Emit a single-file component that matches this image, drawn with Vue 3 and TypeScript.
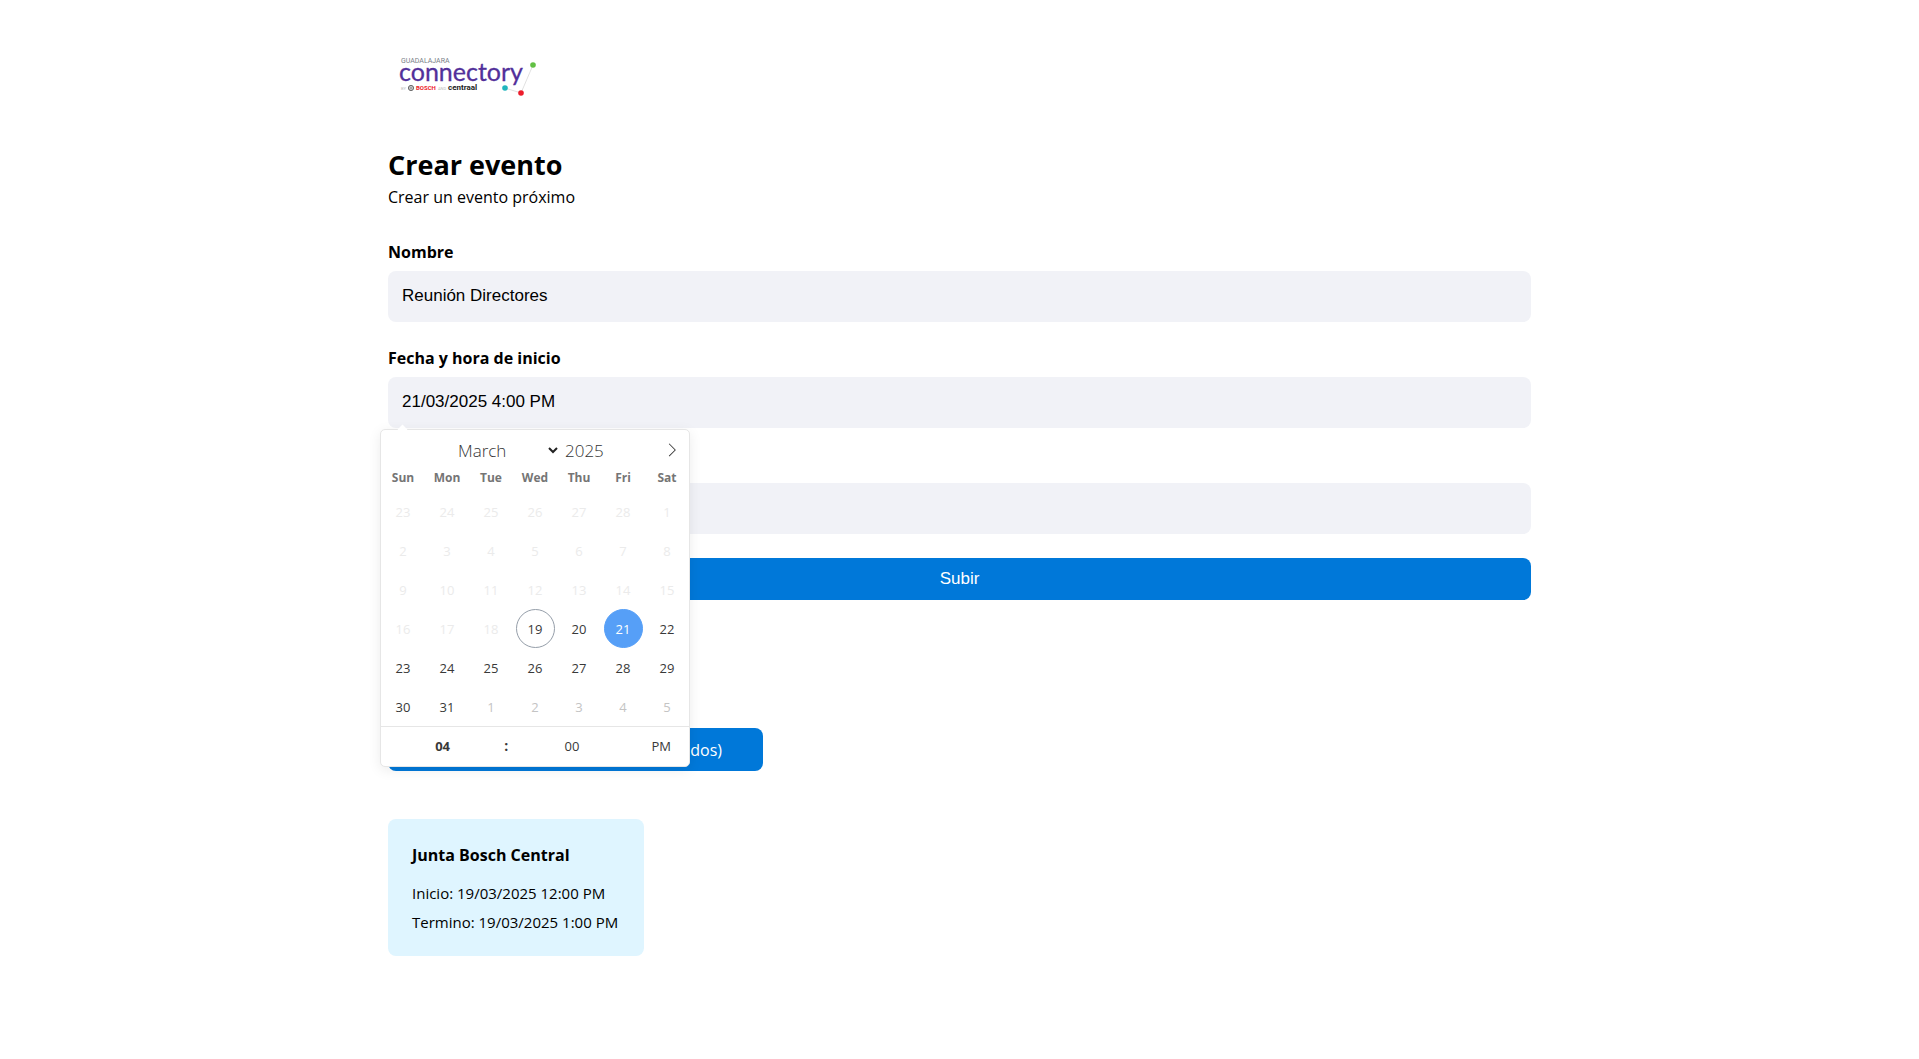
<script setup lang="ts">
import { ref } from 'vue'

interface Day {
  key: number
  label: number
  state: 'disabled' | 'today' | 'selected' | 'next' | 'normal'
}

const name = ref('Reunión Directores')
const start = ref('21/03/2025 4:00 PM')
const end = ref('')
const month = ref('March')
const year = ref('2025')
const hour = ref('04')
const minute = ref('00')

const weekdays = ['Sun', 'Mon', 'Tue', 'Wed', 'Thu', 'Fri', 'Sat']

// Six weeks, starting on Sunday 23 February 2025
const days: Day[] = Array.from({ length: 42 }, (_, i) => {
  const date = new Date(2025, 1, 23 + i)
  const inMonth = date.getMonth() === 2
  const label = date.getDate()
  let state: Day['state'] = 'normal'
  if (date.getMonth() === 3) state = 'next'
  else if (!inMonth || label < 19) state = 'disabled'
  else if (label === 19) state = 'today'
  else if (label === 21) state = 'selected'
  return { key: i, label, state }
})
</script>

<template>
  <main class="page">
    <svg class="logo" width="160" height="64" viewBox="0 0 160 64" role="img" aria-label="Guadalajara Connectory">
      <text x="13" y="23" class="logo-city">GUADALAJARA</text>
      <text x="11" y="41" class="logo-name">connectory</text>
      <text x="13" y="50" class="logo-by">BY</text>
      <circle cx="23" cy="48" r="2.6" fill="none" stroke="#666" />
      <path d="M22 46v4M24 46v4M22 48h2" stroke="#666" stroke-width="0.7" />
      <text x="28" y="50" class="logo-bosch">BOSCH</text>
      <text x="50" y="50" class="logo-by">AND</text>
      <text x="60" y="50" class="logo-centraal">centraal</text>
      <path d="M117 48l16 5l12-28" fill="none" stroke="#d9d9d9" stroke-width="0.8" />
      <circle cx="145" cy="25" r="2.8" fill="#62c044" />
      <circle cx="117" cy="48" r="2.8" fill="#21b5bd" />
      <circle cx="133" cy="53" r="2.8" fill="#ed1c2b" />
    </svg>

    <h1>Crear evento</h1>
    <p class="subtitle">Crear un evento próximo</p>

    <form @submit.prevent>
      <div class="field">
        <label for="name">Nombre</label>
        <input id="name" v-model="name" type="text" />
      </div>

      <div class="field">
        <label for="start">Fecha y hora de inicio</label>
        <input id="start" v-model="start" type="text" />

        <div class="calendar">
          <div class="months">
            <div class="month-select">
              <select v-model="month" aria-label="Month">
                <option>March</option>
              </select>
              <svg width="10" height="7" viewBox="0 0 10 7" aria-hidden="true">
                <path d="M1 1l4 4l4-4" fill="none" stroke="#222" stroke-width="2" />
              </svg>
            </div>
            <input v-model="year" class="year" type="text" aria-label="Year" />
            <button type="button" class="next-month" aria-label="Next month">
              <svg width="14" height="14" viewBox="0 0 17 17">
                <path d="M13.207 8.472l-7.854 7.854-0.707-0.707 7.146-7.146-7.146-7.148 0.707-0.707 7.854 7.854z" fill="#333" />
              </svg>
            </button>
          </div>

          <div class="weekdays">
            <span v-for="day in weekdays" :key="day">{{ day }}</span>
          </div>

          <div class="days">
            <button
              v-for="day in days"
              :key="day.key"
              type="button"
              class="day"
              :class="day.state"
              :disabled="day.state === 'disabled'"
            >
              {{ day.label }}
            </button>
          </div>

          <div class="time">
            <input v-model="hour" class="hour" type="text" aria-label="Hour" />
            <span class="separator">:</span>
            <input v-model="minute" type="text" aria-label="Minute" />
            <button type="button" class="meridiem">PM</button>
          </div>
        </div>
      </div>

      <div class="field unlabelled">
        <input v-model="end" type="text" aria-label="Fecha y hora de fin" />
      </div>

      <button type="submit" class="submit">Subir</button>
    </form>

    <button type="button" class="export">dos)</button>

    <article class="event">
      <h2>Junta Bosch Central</h2>
      <p>Inicio: 19/03/2025 12:00 PM</p>
      <p>Termino: 19/03/2025 1:00 PM</p>
    </article>
  </main>
</template>

<style>
body {
  background: #fff;
}
</style>

<style scoped>
* {
  box-sizing: border-box;
}

.page {
  max-width: 1191px;
  margin: 0 auto;
  padding: 40px 24px;
  color: #000;
  font-family: "Segoe UI", "Open Sans", "Noto Sans", sans-serif;
  font-size: 16px;
  line-height: 24px;
}

button,
input,
select {
  margin: 0;
  border: 0;
  font-family: inherit;
}

.logo {
  display: block;
}

.logo-city {
  fill: #7a7f88;
  font: 7px Roboto, sans-serif;
}

.logo-name {
  fill: #52309a;
  stroke: #52309a;
  stroke-width: 0.3;
  font: 25px Lato, sans-serif;
}

.logo-by {
  fill: #bbb;
  font: 4px Roboto, sans-serif;
}

.logo-bosch {
  fill: #ed1c2b;
  font: bold 6px Roboto, sans-serif;
}

.logo-centraal {
  fill: #222;
  font: bold 8px Roboto, sans-serif;
}

h1 {
  margin: 40px 0 0;
  font-size: 27px;
  line-height: 41px;
}

.subtitle {
  margin: 0 0 31px;
}

.field {
  position: relative;
  margin-bottom: 24px;
}

.unlabelled {
  padding-top: 31px;
}

label {
  display: block;
  margin-bottom: 7px;
  font-weight: 700;
}

.field > input {
  display: block;
  width: 100%;
  height: 51px;
  padding: 0 14px 2px;
  border-radius: 8px;
  background: #f1f2f7;
  color: #000;
  font-family: Arial, "Liberation Sans", sans-serif;
  font-size: 17px;
}

.submit {
  display: block;
  width: 100%;
  height: 42px;
  border-radius: 8px;
  background: #0078d9;
  color: #fff;
  font-family: Arial, "Liberation Sans", sans-serif;
  font-size: 17px;
}

.export {
  display: block;
  width: 375px;
  height: 43px;
  margin-top: 128px;
  padding: 0 41px;
  border-radius: 8px;
  background: #0078d9;
  color: #fff;
  font-size: 16px;
  text-align: right;
  white-space: nowrap;
}

.event {
  width: fit-content;
  min-width: 256px;
  margin-top: 48px;
  padding: 24px 24px 19px;
  border-radius: 8px;
  background: #dff5ff;
}

.event h2 {
  margin: 0 0 12px;
  font-size: 16px;
  line-height: 24px;
}

.event p {
  margin: 0;
  font-size: 15px;
  line-height: 29px;
}

.calendar {
  position: absolute;
  z-index: 1;
  top: 100%;
  left: -8px;
  width: 310px;
  margin-top: 1px;
  border: 1px solid #e6e6e6;
  border-radius: 5px;
  background: #fff;
  box-shadow: 0 3px 13px rgba(0, 0, 0, 0.08);
}

.calendar::before {
  content: "";
  position: absolute;
  top: -4px;
  left: 18px;
  width: 7px;
  height: 7px;
  background: #fff;
  transform: rotate(45deg);
}

.months {
  display: flex;
  align-items: center;
  height: 34px;
  margin-top: 3px;
  padding-left: 77px;
}

.month-select {
  display: flex;
  align-items: center;
  justify-content: space-between;
  width: 100px;
}

.month-select select {
  padding: 0;
  appearance: none;
  background: transparent;
  color: #333;
  font-size: 17px;
  font-weight: 300;
}

.year {
  width: 56px;
  margin-left: 7px;
  padding: 0;
  background: transparent;
  color: #333;
  font-size: 17px;
  font-weight: 300;
}

.next-month {
  display: flex;
  margin-left: auto;
  padding: 10px;
  background: transparent;
}

.weekdays {
  display: grid;
  grid-template-columns: repeat(7, 1fr);
  height: 25px;
  color: #757575;
  font-size: 12px;
  font-weight: 700;
  line-height: 22px;
  text-align: center;
}

.days {
  display: grid;
  grid-template-columns: repeat(7, 1fr);
  justify-items: center;
}

.day {
  width: 39px;
  height: 39px;
  padding: 1px 0 0;
  border: 1px solid transparent;
  border-radius: 50%;
  background: transparent;
  color: #393939;
  font-size: 13px;
}

.disabled {
  color: #ebebeb;
}

.next {
  color: #c4c4c4;
}

.today {
  border-color: #959ea9;
}

.selected {
  border-color: #569ff7;
  background: #569ff7;
  color: #fff;
}

.time {
  display: flex;
  align-items: center;
  height: 40px;
  padding-bottom: 1px;
  border-top: 1px solid #e6e6e6;
  color: #393939;
  font-size: 14px;
}

.time input {
  width: 40%;
  padding: 0;
  background: transparent;
  color: #393939;
  font-size: 13px;
  text-align: center;
}

.time .hour {
  font-weight: 700;
}

.separator {
  width: 2%;
  font-weight: 700;
}

.meridiem {
  width: 18%;
  padding: 0;
  background: transparent;
  color: #393939;
  font-size: 13px;
}
</style>
